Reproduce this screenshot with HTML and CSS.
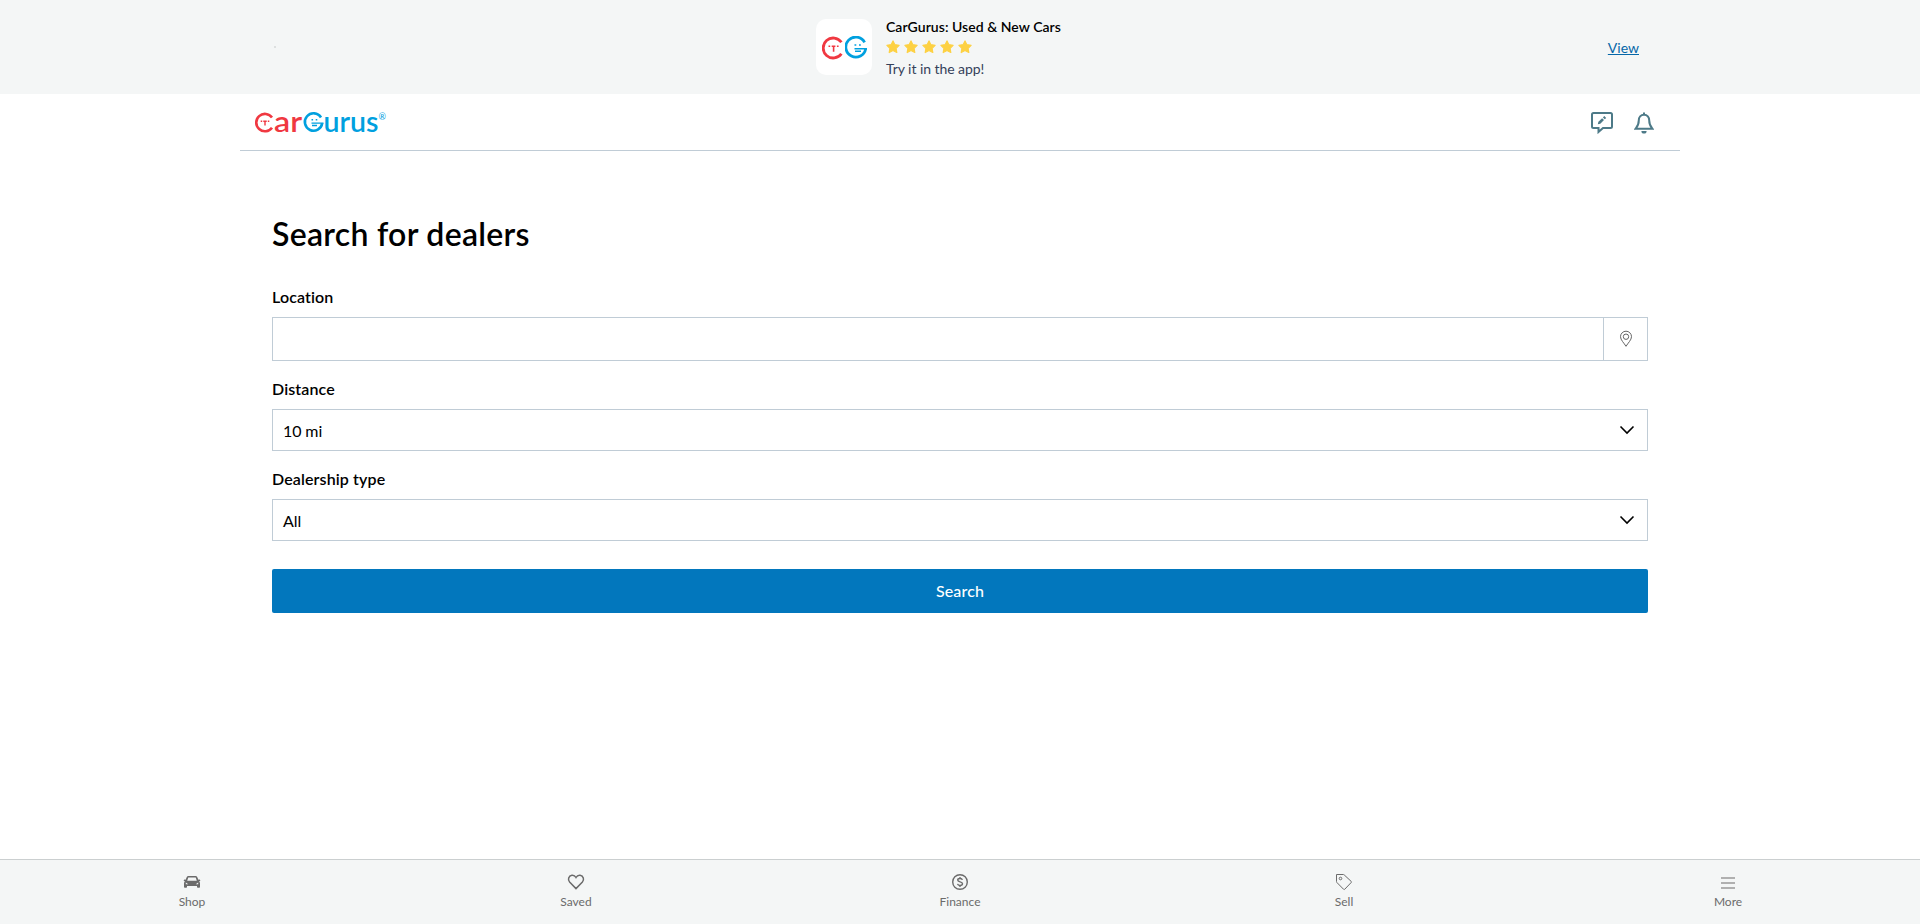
FILE: index.html
```html
<!DOCTYPE html>
<html lang="en">
<head>
<meta charset="utf-8">
<title>Search for dealers - CarGurus</title>
<link rel="stylesheet" href="styles.css">
</head>
<body>
<svg class="defs" width="0" height="0">
  <symbol id="face-c" viewBox="0 0 21 24">
    <path class="ring" d="M19.400 6.300A10 10 0 1 0 19.400 17.700"/>
    <path class="thin" d="M6.500 10.300h1.700M14.900 10.300h1.700M9.700 10.300h3.700M11.600 10.300v5.400"/>
  </symbol>
  <symbol id="face-g" viewBox="0 0 22 24">
    <path class="ring" d="M19.600 6.300A10 10 0 1 0 20.700 12.600"/>
    <path class="thin" d="M9.500 9h1.800M14 9h1.800M9.500 12.700h12.500M10 15.300h6"/>
  </symbol>
  <symbol id="star" viewBox="0 0 14 14">
    <path d="M7 .9l1.900 3.800 4.200.6-3 3 .7 4.200L7 10.500l-3.800 2 .7-4.200-3-3 4.200-.6z" stroke-width="1.200" stroke-linejoin="round"/>
  </symbol>
</svg>

<aside class="banner">
  <span class="dot"></span>
  <div class="app">
    <div class="app-icon">
      <svg class="red" width="21" height="24"><use href="#face-c"/></svg>
      <svg class="blue" width="22" height="24"><use href="#face-g"/></svg>
    </div>
    <div class="app-info">
      <strong>CarGurus: Used &amp; New Cars</strong>
      <div class="stars">
        <svg><use href="#star"/></svg><svg><use href="#star"/></svg><svg><use href="#star"/></svg><svg><use href="#star"/></svg><svg><use href="#star"/></svg>
      </div>
      <span>Try it in the app!</span>
    </div>
  </div>
  <a class="view" href="#">View</a>
</aside>

<header class="header">
  <svg class="logo" width="140" height="44" viewBox="0 -11 140 44">
    <g class="red">
      <path class="ring" d="M18 6.500A8.700 8.700 0 1 0 18 16.700"/>
      <path class="thin" d="M6.700 10.200h1.500M13.800 10.200h1.500M9.300 10.200h3.400M11 10.200v4.400"/>
      <text x="20" y="20.700" textLength="28" lengthAdjust="spacingAndGlyphs">ar</text>
    </g>
    <g class="blue">
      <path class="ring" d="M67 6.500A8.700 8.700 0 1 0 68.200 12.100"/>
      <path class="thin" d="M57.500 8.800h1.600M61.700 8.800h1.600M57.500 12.100h12M58 14.500h5"/>
      <text x="69.500" y="20.700" textLength="55" lengthAdjust="spacingAndGlyphs">urus</text>
      <text class="reg" x="124.500" y="8.500">®</text>
    </g>
  </svg>
  <div class="actions">
    <svg width="22" height="22" viewBox="0 0 22 22"><path d="M2.500 1h17a1.500 1.500 0 0 1 1.500 1.500v12a1.500 1.500 0 0 1-1.500 1.500H12l-4.500 4V16h-5A1.500 1.500 0 0 1 1 14.500v-12A1.500 1.500 0 0 1 2.500 1z"/><path d="M6.800 12.300l.6-2.500 3.700-3.600 1.900 1.900-3.700 3.600zM11.900 5.400l1.400-1.300 1.900 1.900-1.400 1.300z" class="pencil"/></svg>
    <svg width="20" height="22" viewBox="0 0 20 22"><path d="M10 2.800c-3.300 0-5.200 2.400-5.200 5.500 0 5-1.300 6.200-3.300 8.500h17c-2-2.300-3.300-3.500-3.300-8.500C15.200 5.200 13.300 2.800 10 2.800zM10 .5v2.300"/><path d="M7.400 19h5.200a2.600 2.600 0 0 1-5.200 0z" class="pencil"/></svg>
  </div>
</header>

<main class="main">
  <h1>Search for dealers</h1>
  <form class="form">
    <label>Location</label>
    <div class="control location">
      <span></span>
      <button class="locate" type="button"><svg width="14" height="18" viewBox="0 0 14 18"><path d="M7 16.300C5 13 1.500 9.900 1.500 6.700a5.500 5.500 0 0 1 11 0C12.500 9.900 9 13 7 16.300z"/><circle cx="7" cy="6.700" r="2.700"/></svg></button>
    </div>
    <label>Distance</label>
    <div class="control select"><span>10 mi</span><svg width="16" height="10" viewBox="0 0 16 10"><path d="M1.500 1.500L8 8l6.500-6.500"/></svg></div>
    <label>Dealership type</label>
    <div class="control select"><span>All</span><svg width="16" height="10" viewBox="0 0 16 10"><path d="M1.500 1.500L8 8l6.500-6.500"/></svg></div>
    <button class="submit" type="button">Search</button>
  </form>
</main>

<nav class="nav">
  <a><svg viewBox="0 0 18 18"><path class="solid" fill-rule="evenodd" d="M5.400 3h7.200a1.800 1.800 0 0 1 1.600 1l1.200 2.800 1.400-.3.600 1.300-1.300.6.900 1.400V14q0 .8-.8.800h-1.400q-.8 0-.8-.8v-1H4v1q0 .8-.8.800H1.800Q1 14.800 1 14V9.800l.9-1.400L.6 7.800l.6-1.300 1.400.3L3.800 4a1.800 1.800 0 0 1 1.600-1zM5.300 4.600L4.200 7.700h9.600l-1.100-3.100zM2.800 9.400v1.800h2.500zM15.200 9.400l-2.500 1.800h2.500z"/></svg>Shop</a>
  <a><svg viewBox="0 0 18 18"><path stroke-width="1.500" d="M9 15.600L2.600 9.100C.5 6.700 1.500 2.700 4.900 2.300 6.800 2.100 8.200 3.100 9 4.500c.8-1.400 2.200-2.400 4.100-2.200 3.400.4 4.400 4.400 2.300 6.800z"/></svg>Saved</a>
  <a><svg viewBox="0 0 18 18"><circle cx="9" cy="9" r="7.300" stroke-width="1.400"/><path stroke-width="1.400" d="M11.400 6.900C11.100 5.900 10.100 5.500 9 5.500c-1.400 0-2.300.6-2.300 1.600 0 2.400 4.800 1.200 4.800 3.700 0 1.100-1.100 1.700-2.500 1.700-1.300 0-2.200-.5-2.500-1.600M9 4v1.500M9 12.500V14"/></svg>Finance</a>
  <a><svg viewBox="0 0 18 18"><path stroke-width="1" d="M1.500 1.500h6.700a1.500 1.500 0 0 1 1 .4l7 6.500a.8.800 0 0 1 0 1.100l-6.500 6.800a.8.800 0 0 1-1.100 0L1.900 9.500a1.500 1.500 0 0 1-.4-1z"/><circle cx="5.500" cy="5.500" r="1.300"/></svg>Sell</a>
  <a><svg viewBox="0 0 18 18"><path class="bars" d="M2 5h14M2 10h14M2 15h14"/></svg>More</a>
</nav>
</body>
</html>
```
FILE: styles.css
```css
* { box-sizing: border-box; }
body {
  margin: 0;
  height: 924px;
  display: flex;
  flex-direction: column;
  font: 16px/24px Lato, sans-serif;
  font-variant-ligatures: none;
  color: #000;
  background: #fff;
}
.defs { position: absolute; }
svg { display: block; fill: none; }
.red { stroke: #f03841; fill: none; }
.blue { stroke: #00a0df; fill: none; }
.ring { stroke-width: 2.8; }
.thin { stroke-width: 1.6; }

.banner {
  height: 94px;
  flex: none;
  padding: 0 272px;
  display: grid;
  grid-template-columns: 1fr auto 1fr;
  align-items: center;
  background: #f4f6f6;
}
.dot { width: 2px; height: 2px; margin-left: 2px; background: #dde0e0; }
.app { display: flex; align-items: center; gap: 14px; width: 288px; }
.app-icon {
  width: 56px;
  height: 56px;
  border-radius: 10px;
  background: #fff;
  display: flex;
  align-items: center;
  justify-content: center;
  gap: 2px;
  padding-top: 1px;
}
.app-info { font-size: 14px; line-height: 21px; color: #34415a; }
.app-info strong { display: block; font-weight: 600; letter-spacing: 0.04px; color: #000; white-space: nowrap; }
.app-info > span { display: block; letter-spacing: -0.05px; }
.stars { display: flex; gap: 4px; height: 21px; align-items: center; }
.stars svg { width: 14px; height: 14px; fill: #fdd143; stroke: #fdd143; }
.view { justify-self: end; margin-right: 9px; padding-top: 2px; font-size: 14px; color: #0667a8; }

.header {
  width: 1440px;
  height: 57px;
  flex: none;
  margin: 0 auto;
  padding: 0 26px 0 14px;
  display: flex;
  align-items: center;
  justify-content: space-between;
  border-bottom: 1px solid #c0ccd6;
}
.logo .ring { stroke-width: 2.6; }
.logo .thin { stroke-width: 1.4; }
.logo text { font: 600 28px/1 Lato, sans-serif; stroke: none; fill: #f03841; }
.logo .blue text { fill: #00a0df; }
.logo .reg { font-size: 9px; font-weight: 400; }
.actions { display: flex; gap: 21px; padding-top: 1px; }
.actions svg { stroke: #4d7a88; stroke-width: 2; }
.actions .pencil { fill: #4d7a88; stroke: none; }

.main { width: 1376px; margin: 0 auto; padding-top: 63px; flex: 1; }
h1 { margin: 0; font-size: 32px; line-height: 40px; font-weight: 600; letter-spacing: 0.28px; }
.form { display: flex; flex-direction: column; padding-top: 31px; }
label { font-weight: 600; letter-spacing: 0.12px; margin-bottom: 8px; }
.control {
  display: flex;
  align-items: center;
  justify-content: space-between;
  border: 1px solid #c0ccd6;
}
.location { height: 44px; margin-bottom: 16px; }
.locate {
  width: 44px;
  height: 42px;
  padding: 0;
  border: 0;
  border-left: 1px solid #c0ccd6;
  background: #fff;
  display: flex;
  align-items: center;
  justify-content: center;
}
.locate svg { stroke: #666; }
.select { height: 42px; padding: 2px 12px 0 10px; margin-bottom: 16px; }
.select span { letter-spacing: -0.1px; }
.select svg { stroke: #000; stroke-width: 1.6; margin-top: -2px; }
.submit {
  height: 44px;
  margin-top: 12px;
  border: 0;
  border-radius: 2px;
  background: #0277bd;
  color: #fff;
  font: 500 16px/24px Lato, sans-serif;
  letter-spacing: 0.15px;
}

.nav {
  height: 65px;
  flex: none;
  display: grid;
  grid-template-columns: repeat(5, 1fr);
  border-top: 1px solid #cbcfd0;
  background: #f4f6f6;
}
.nav a {
  display: flex;
  flex-direction: column;
  align-items: center;
  padding-top: 13px;
  font-size: 12px;
  line-height: 22px;
  color: #6b6b6b;
}
.nav svg { width: 18px; height: 18px; stroke: #6b6b6b; }
.nav .solid { fill: #6b6b6b; stroke: none; }
.nav .bars { stroke: #b0b0b0; stroke-width: 2; }
```
